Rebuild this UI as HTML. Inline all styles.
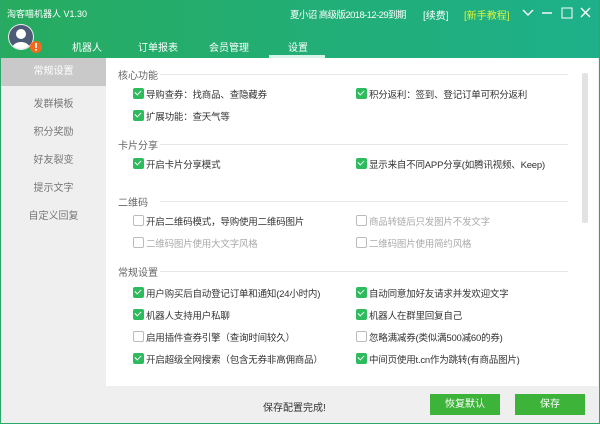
<!DOCTYPE html>
<html><head><meta charset="utf-8"><style>
*{margin:0;padding:0;box-sizing:border-box}
body{width:600px;height:424px;overflow:hidden;font-family:"Liberation Sans","Noto Sans CJK SC",sans-serif;font-size:10px;color:#333;position:relative;background:#efefef}
.hdr{position:absolute;left:0;top:0;width:600px;height:58px;background:linear-gradient(90deg,#27ab5f,#1db08a)}
.a{position:absolute;white-space:nowrap}
.w{color:#fff}
.side{position:absolute;left:1px;top:58px;width:105px;height:365px;background:#efefef}
.si{position:absolute;left:0;width:105px;text-align:center;color:#777;font-size:10px}
.main{position:absolute;left:106px;top:58px;width:492px;height:328px;background:#fff}
.sec{position:absolute;left:12px;color:#666;font-size:10px}
.ln{position:absolute;left:54px;width:408px;height:1px;background:#e6e6e6}
.cb{position:absolute;width:11px;height:11px;border-radius:2px}
.on{background:#2dbb5e}
.on:after{content:"";position:absolute;left:2px;top:2px;width:5px;height:3px;border-left:1.5px solid #fff;border-bottom:1.5px solid #fff;transform:rotate(-45deg)}
.off{border:1px solid #bbb;background:#fff}
.t{position:absolute;font-size:9.5px;color:#333;white-space:nowrap;letter-spacing:-0.2px}
.g{color:#aaa}
.btn{position:absolute;top:394px;height:21px;width:70px;background:#3db33a;color:#fff;text-align:center;line-height:21px;font-size:10px}
</style></head><body>
<div class="hdr"></div>
<div class="a w" style="left:7px;top:7px;font-size:9px">淘客喵机器人 V1.30</div>
<div class="a w" style="left:290px;top:7px;font-size:9.5px;letter-spacing:-0.6px">夏小诏 高级版2018-12-29到期</div>
<div class="a w" style="left:423px;top:7px;font-size:10px">[续费]</div>
<div class="a" style="left:464px;top:7px;font-size:10px;color:#dff53a">[新手教程]</div>
<svg class="a" style="left:520px;top:6px" width="76" height="14" viewBox="0 0 76 14" fill="none" stroke="#fff" stroke-width="1.4"><path d="M3 4l5 5 5-5"/><path d="M22 7h10"/><rect x="42" y="2" width="10" height="10" stroke-width="1"/><path d="M61 2l9 9M70 2l-9 9"/></svg>
<svg class="a" style="left:8px;top:23px" width="36" height="36" viewBox="0 0 36 36"><circle cx="13" cy="14" r="13" fill="#eee"/><clipPath id="c"><circle cx="13" cy="14" r="12"/></clipPath><g clip-path="url(#c)" fill="#4d5b77"><circle cx="13" cy="14" r="13" fill="#4d5b77"/><circle cx="13" cy="11" r="5" fill="#fff"/><ellipse cx="13" cy="26" rx="9" ry="7" fill="#fff"/></g><circle cx="28" cy="24" r="6" fill="#f06a1d"/><rect x="27.2" y="20" width="1.6" height="5" fill="#fff"/><rect x="27.2" y="26" width="1.6" height="1.6" fill="#fff"/></svg>
<div class="a w" style="left:72px;top:39px;font-size:10px">机器人</div>
<div class="a w" style="left:138px;top:39px;font-size:10px">订单报表</div>
<div class="a w" style="left:209px;top:39px;font-size:10px">会员管理</div>
<div class="a w" style="left:288px;top:39px;font-size:10px">设置</div>
<div class="a" style="left:269px;top:55px;width:56px;height:3px;background:#d8f3ea"></div>
<div class="side">
<div class="si" style="top:0;height:28px;line-height:28px;background:#c9c9c9;color:#fff">常规设置</div>
<div class="si" style="top:37px">发群模板</div>
<div class="si" style="top:65px">积分奖励</div>
<div class="si" style="top:93px">好友裂变</div>
<div class="si" style="top:121px">提示文字</div>
<div class="si" style="top:149px">自定义回复</div>
</div>
<div class="main">
<div class="sec" style="top:9px">核心功能</div><div class="ln" style="top:16px"></div>
<div class="cb on" style="left:27px;top:30px"></div><div class="t" style="left:40px;top:29px">导购查券：找商品、查隐藏券</div>
<div class="cb on" style="left:250px;top:30px"></div><div class="t" style="left:263px;top:29px">积分返利：签到、登记订单可积分返利</div>
<div class="cb on" style="left:27px;top:52px"></div><div class="t" style="left:40px;top:51px">扩展功能：查天气等</div>
<div class="sec" style="top:79px">卡片分享</div><div class="ln" style="top:86px"></div>
<div class="cb on" style="left:27px;top:100px"></div><div class="t" style="left:40px;top:99px">开启卡片分享模式</div>
<div class="cb on" style="left:250px;top:100px"></div><div class="t" style="left:263px;top:99px">显示来自不同APP分享(如腾讯视频、Keep)</div>
<div class="sec" style="top:136px">二维码</div><div class="ln" style="top:143px"></div>
<div class="cb off" style="left:27px;top:157px"></div><div class="t" style="left:40px;top:156px">开启二维码模式，导购使用二维码图片</div>
<div class="cb off" style="left:250px;top:157px"></div><div class="t g" style="left:263px;top:156px">商品转链后只发图片不发文字</div>
<div class="cb off" style="left:27px;top:179px"></div><div class="t g" style="left:40px;top:178px">二维码图片使用大文字风格</div>
<div class="cb off" style="left:250px;top:179px"></div><div class="t g" style="left:263px;top:178px">二维码图片使用简约风格</div>
<div class="sec" style="top:206px">常规设置</div><div class="ln" style="top:213px"></div>
<div class="cb on" style="left:27px;top:229px"></div><div class="t" style="left:40px;top:228px">用户购买后自动登记订单和通知(24小时内)</div>
<div class="cb on" style="left:250px;top:229px"></div><div class="t" style="left:263px;top:228px">自动同意加好友请求并发欢迎文字</div>
<div class="cb on" style="left:27px;top:251px"></div><div class="t" style="left:40px;top:250px">机器人支持用户私聊</div>
<div class="cb on" style="left:250px;top:251px"></div><div class="t" style="left:263px;top:250px">机器人在群里回复自己</div>
<div class="cb off" style="left:27px;top:273px"></div><div class="t" style="left:40px;top:272px">启用插件查券引擎（查询时间较久）</div>
<div class="cb off" style="left:250px;top:273px"></div><div class="t" style="left:263px;top:272px">忽略满减券(类似满500减60的券)</div>
<div class="cb on" style="left:27px;top:295px"></div><div class="t" style="left:40px;top:294px">开启超级全网搜索（包含无券非高佣商品）</div>
<div class="cb on" style="left:250px;top:295px"></div><div class="t" style="left:263px;top:294px">中间页使用t.cn作为跳转(有商品图片)</div>
<div class="a" style="left:476px;top:15px;width:6px;height:150px;background:#e2e2e2;border-radius:2px"></div>
</div>
<div class="a" style="left:263px;top:399px;font-size:10px;color:#333">保存配置完成!</div>
<div class="btn" style="left:430px">恢复默认</div>
<div class="btn" style="left:515px">保存</div>
<div class="a" style="left:0;top:0;width:600px;height:424px;border:1px solid #2aa86a;border-top:none"></div>
</body></html>
